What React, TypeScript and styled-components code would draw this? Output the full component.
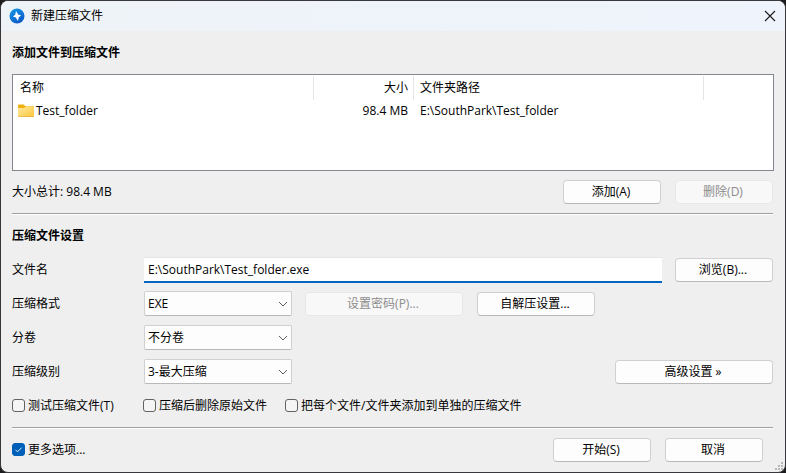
import React from 'react';
import styled, { createGlobalStyle } from 'styled-components';

const GlobalStyle = createGlobalStyle`
  *, *::before, *::after { box-sizing: border-box; }
  body { margin: 0; background: #1c1b1e; }
  body, button, input, select {
    font-family: 'Open Sans', 'Noto Sans CJK SC', sans-serif;
    font-size: 12px;
    line-height: 16px;
    color: #000;
  }
`;

const Window = styled.div`
  position: relative;
  display: flex;
  flex-direction: column;
  min-height: 100vh;
  background: #efefef;
  border: 1px solid #38373b;
  border-radius: 8px;
  overflow: hidden;
`;

const TitleBar = styled.header`
  display: flex;
  align-items: center;
  height: 30px;
  padding: 0 8px;
  gap: 6px;
  background: linear-gradient(90deg, #eef3f8, #eff3fb);
`;

const Title = styled.h1`
  flex: 1;
  margin: 0;
  font-size: 12px;
  font-weight: 400;
  line-height: 16px;
`;

const CloseButton = styled.button`
  display: flex;
  padding: 0;
  border: 0;
  background: none;
`;

const Content = styled.main`
  flex: 1;
  display: flex;
  flex-direction: column;
  padding: 12px 12px 10px 11px;
`;

const Heading = styled.h2`
  margin: 0;
  font-size: 12px;
  font-weight: 700;
  line-height: 20px;
`;

const FileList = styled.div`
  flex: 1;
  min-height: 97px;
  margin: 11px -1px 9px 0;
  background: #fff;
  border: 1px solid #828790;
`;

const Table = styled.table`
  width: 100%;
  table-layout: fixed;
  border-collapse: collapse;
`;

const HeadCell = styled.th<{ $width?: number }>`
  width: ${(p) => (p.$width ? `${p.$width}px` : 'auto')};
  height: 26px;
  padding: 0;
  font-weight: 400;
`;

const HeadLabel = styled.div<{ $end?: boolean }>`
  height: 24px;
  padding: 0 5px 0 6px;
  line-height: 24px;
  text-align: ${(p) => (p.$end ? 'right' : 'left')};
  border-right: 1px solid #e5e5e5;
`;

const FirstHeadLabel = styled(HeadLabel)`
  padding-left: 7px;
`;

const Cell = styled.td<{ $end?: boolean }>`
  height: 20px;
  padding: 0 6px;
  text-align: ${(p) => (p.$end ? 'right' : 'left')};
`;

const FileName = styled.span`
  display: flex;
  align-items: center;
  gap: 2px;
  margin-left: -1px;
`;

const Row = styled.div<{ $gap?: number }>`
  display: flex;
  align-items: center;
  gap: ${(p) => p.$gap ?? 14}px;
`;

const Spacer = styled.div`
  flex: 1;
`;

const Button = styled.button<{ $width?: number }>`
  width: ${(p) => p.$width ?? 98}px;
  height: 24px;
  padding: 0 2px 0 0;
  background: #fdfdfd;
  border: 1px solid #d0d0d0;
  border-bottom-color: #b9b9b9;
  border-radius: 4px;

  &:disabled {
    color: #8c8c8c;
    background: #f8f8f8;
    border-color: #e7e7e7;
  }
`;

const Divider = styled.hr`
  width: 100%;
  margin: 0;
  border: 0;
  border-top: 1px solid #a0a0a0;
  border-bottom: 1px solid #fff;
`;

const UpperDivider = styled(Divider)`
  margin: 9px 0 11px;
`;

const LowerDivider = styled(Divider)`
  margin: 8px 0 9px;
`;

const Form = styled.form`
  display: grid;
  gap: 8px;
  margin-top: 11px;
`;

const Field = styled.div`
  display: grid;
  grid-template-columns: 132px 1fr;
  align-items: center;
  height: 26px;
`;

const TextInput = styled.input`
  flex: 1;
  min-width: 0;
  height: 26px;
  padding: 0 4px;
  background: #fff;
  border: 0;
  border-top: 1px solid #e6e6e6;
  border-bottom: 2px solid #0067c0;
  border-radius: 0;
  outline: 0;
`;

const SelectBox = styled.div`
  position: relative;
  width: 148px;
  height: 26px;

  svg {
    position: absolute;
    right: 4px;
    top: 9px;
    pointer-events: none;
  }
`;

const SelectInput = styled.select`
  appearance: none;
  display: block;
  width: 100%;
  height: 25px;
  padding: 0 20px 0 3px;
  background: #fdfdfd;
  border: 1px solid #d0d0d0;
  border-bottom-color: #b9b9b9;
  border-radius: 2px;
`;

const Checks = styled.div`
  display: grid;
  grid-template-columns: 131px 142px auto;
  align-items: start;
  height: 26px;
  padding-top: 1px;
`;

const CheckLabel = styled.label`
  position: relative;
  display: flex;
  align-items: center;
  gap: 3px;
  margin-top: 4px;
  line-height: 15px;

  svg {
    position: absolute;
    left: 0;
    display: none;
    pointer-events: none;
  }

  input:checked + svg {
    display: block;
  }
`;

const CheckInput = styled.input`
  appearance: none;
  flex: none;
  width: 13px;
  height: 13px;
  margin: 0;
  background: #f5f5f5;
  border: 1px solid #626262;
  border-radius: 3px;

  &:checked {
    background: #005fb8;
    border-color: #005fb8;
  }
`;

const Footer = styled(Row)`
  align-items: flex-start;
  padding-right: 10px;
`;

const Grip = styled.svg`
  position: absolute;
  right: 2px;
  bottom: 2px;
`;

const Logo = () => (
  <svg width="16" height="16" viewBox="0 0 16 16" aria-hidden="true">
    <defs>
      <linearGradient id="logo" x1="0" y1="0" x2="0.6" y2="1">
        <stop offset="0" stopColor="#159be6" />
        <stop offset="1" stopColor="#0b5bc9" />
      </linearGradient>
    </defs>
    <circle cx="8" cy="8" r="7.5" fill="url(#logo)" />
    <path d="M7 3 L9.2 6.4 L12.2 7.6 L9.8 9.2 L9 13 L6.8 9.6 L3.8 8.4 L6.2 6.8 Z" fill="#fff" />
  </svg>
);

const FolderIcon = () => (
  <svg width="16" height="14" viewBox="0 0 16 14" aria-hidden="true">
    <defs>
      <linearGradient id="folder" x1="0" y1="0" x2="1" y2="1">
        <stop offset="0" stopColor="#ffe8a0" />
        <stop offset="1" stopColor="#fcc83c" />
      </linearGradient>
    </defs>
    <path d="M0 1.5 Q0 .5 1 .5 H5.6 L7.6 2.2 H15 Q16 2.2 16 3.2 V8 H0 Z" fill="#f0b010" />
    <path d="M0 4 H6 L8 2.4 H15.2 Q16 2.4 16 3.4 V12 Q16 13 15 13 H1 Q0 13 0 12 Z" fill="url(#folder)" />
    <path d="M.2 12.5 Q.5 13 1 13 H15 Q15.5 13 15.8 12.5 Z" fill="#d9a030" />
  </svg>
);

const Select = ({ id, value }: { id: string; value: string }) => (
  <SelectBox>
    <SelectInput id={id} defaultValue={value}>
      <option>{value}</option>
    </SelectInput>
    <svg width="10" height="8" viewBox="0 0 10 8" aria-hidden="true">
      <path d="M1 2 L5 6 L9 2" fill="none" stroke="#5c5c5c" />
    </svg>
  </SelectBox>
);

const Check = ({ label, checked }: { label: string; checked?: boolean }) => (
  <CheckLabel>
    <CheckInput type="checkbox" defaultChecked={checked} />
    <svg width="13" height="13" viewBox="0 0 13 13" aria-hidden="true">
      <path d="M3.5 6.8 L5.5 8.8 L9.7 4.6" fill="none" stroke="#fff" strokeWidth="0.9" />
    </svg>
    {label}
  </CheckLabel>
);

export default function App() {
  return (
    <>
      <GlobalStyle />
      <Window>
        <TitleBar>
          <Logo />
          <Title>新建压缩文件</Title>
          <CloseButton type="button" aria-label="关闭">
            <svg width="14" height="14" viewBox="0 0 14 14">
              <path d="M2 2 L12 12 M12 2 L2 12" stroke="#1a1a1a" strokeWidth="1.1" />
            </svg>
          </CloseButton>
        </TitleBar>
        <Content>
          <Heading>添加文件到压缩文件</Heading>
          <FileList>
            <Table>
              <thead>
                <tr>
                  <HeadCell $width={301}><FirstHeadLabel>名称</FirstHeadLabel></HeadCell>
                  <HeadCell $width={100}><HeadLabel $end>大小</HeadLabel></HeadCell>
                  <HeadCell $width={290}><HeadLabel>文件夹路径</HeadLabel></HeadCell>
                  <HeadCell as="td" />
                </tr>
              </thead>
              <tbody>
                <tr>
                  <Cell><FileName><FolderIcon />Test_folder</FileName></Cell>
                  <Cell $end>98.4 MB</Cell>
                  <Cell>E:\SouthPark\Test_folder</Cell>
                  <Cell />
                </tr>
              </tbody>
            </Table>
          </FileList>
          <Row>
            <span>大小总计: 98.4 MB</span>
            <Spacer />
            <Row>
              <Button type="button">添加(A)</Button>
              <Button type="button" disabled>删除(D)</Button>
            </Row>
          </Row>
          <UpperDivider />
          <Heading>压缩文件设置</Heading>
          <Form>
            <Field>
              <label htmlFor="name">文件名</label>
              <Row $gap={13}>
                <TextInput id="name" type="text" defaultValue="E:\SouthPark\Test_folder.exe" />
                <Button type="button">浏览(B)...</Button>
              </Row>
            </Field>
            <Field>
              <label htmlFor="format">压缩格式</label>
              <Row $gap={13}>
                <Select id="format" value="EXE" />
                <Row>
                  <Button type="button" $width={158} disabled>设置密码(P)...</Button>
                  <Button type="button" $width={118}>自解压设置...</Button>
                </Row>
              </Row>
            </Field>
            <Field>
              <label htmlFor="volume">分卷</label>
              <Select id="volume" value="不分卷" />
            </Field>
            <Field>
              <label htmlFor="level">压缩级别</label>
              <Row>
                <Select id="level" value="3-最大压缩" />
                <Spacer />
                <Button type="button" $width={158}>高级设置 »</Button>
              </Row>
            </Field>
            <Checks>
              <Check label="测试压缩文件(T)" />
              <Check label="压缩后删除原始文件" />
              <Check label="把每个文件/文件夹添加到单独的压缩文件" />
            </Checks>
          </Form>
          <LowerDivider />
          <Footer>
            <Check label="更多选项..." checked />
            <Spacer />
            <Row>
              <Button type="submit">开始(S)</Button>
              <Button type="button">取消</Button>
            </Row>
          </Footer>
        </Content>
        <Grip width="8" height="8" viewBox="0 0 8 8" aria-hidden="true">
          <path d="M6 0h2v2h-2z M3 3h2v2h-2z M6 3h2v2h-2z M0 6h2v2h-2z M3 6h2v2h-2z M6 6h2v2h-2z" fill="#b8b8b8" />
        </Grip>
      </Window>
    </>
  );
}
